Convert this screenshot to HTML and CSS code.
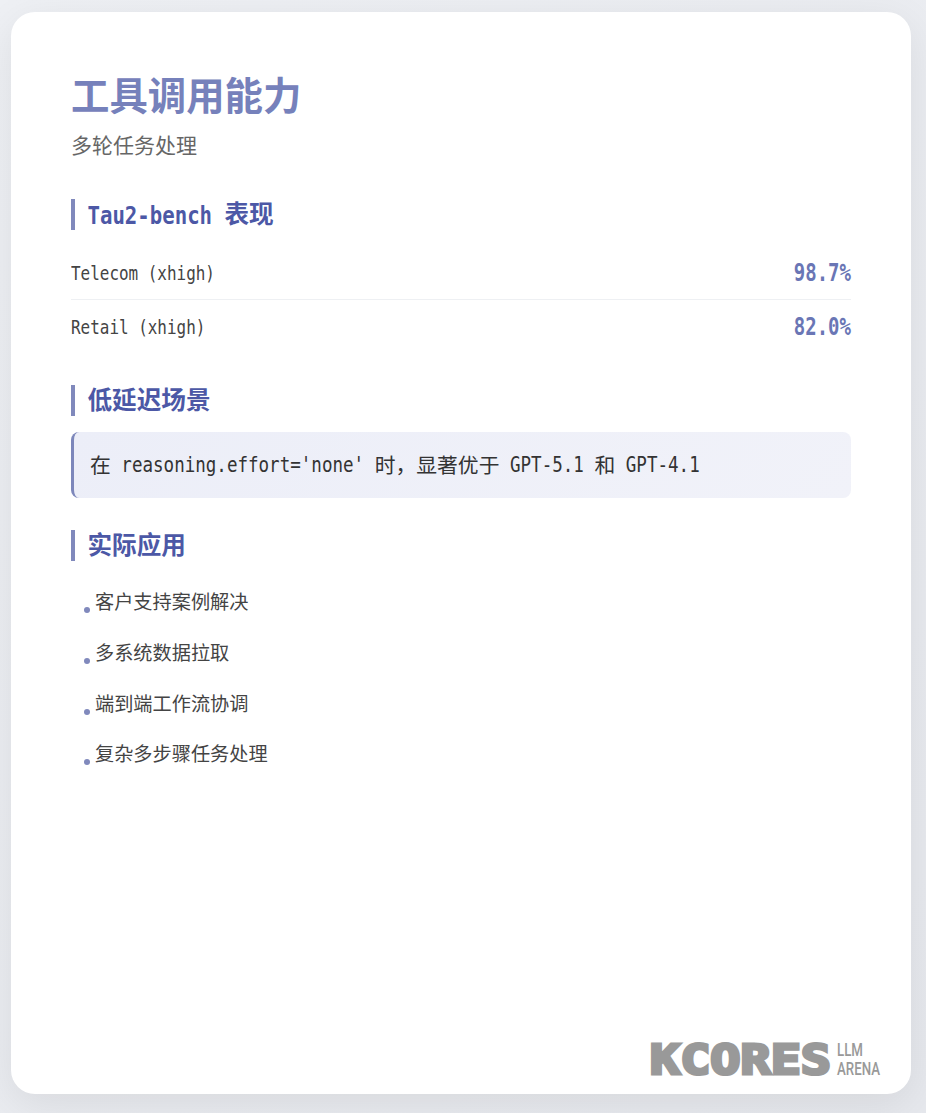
FILE: index.html
```html
<!DOCTYPE html>
<html lang="zh-CN">
<head>
<meta charset="utf-8">
<title>工具调用能力</title>
<link rel="stylesheet" href="styles.css">
</head>
<body>
<main class="card">
  <h1 class="title">工具调用能力</h1>
  <p class="subtitle">多轮任务处理</p>

  <section class="section section-first">
    <h2 class="heading"><span class="lat">Tau2-bench </span>表现</h2>
    <div class="stat">
      <span class="stat-label">Telecom (xhigh)</span>
      <span class="stat-value">98.7%</span>
    </div>
    <div class="stat">
      <span class="stat-label">Retail (xhigh)</span>
      <span class="stat-value">82.0%</span>
    </div>
  </section>

  <section class="section section-second">
    <h2 class="heading">低延迟场景</h2>
    <div class="callout">在<span class="lat"> reasoning.effort='none' </span>时，显著优于<span class="lat"> GPT-5.1 </span>和<span class="lat"> GPT-4.1</span></div>
  </section>

  <section class="section section-third">
    <h2 class="heading">实际应用</h2>
    <ul class="list">
      <li class="list-item">客户支持案例解决</li>
      <li class="list-item">多系统数据拉取</li>
      <li class="list-item">端到端工作流协调</li>
      <li class="list-item">复杂多步骤任务处理</li>
    </ul>
  </section>

  <svg class="logo" width="232" height="60" viewBox="0 0 232 60" role="img" aria-label="KCORES LLM ARENA">
    <text class="logo-word" x="1" y="54" textLength="181" lengthAdjust="spacingAndGlyphs">KCORES</text>
    <text class="logo-side" x="188" y="36" textLength="26" lengthAdjust="spacingAndGlyphs">LLM</text>
    <text class="logo-side" x="188" y="55" textLength="43" lengthAdjust="spacingAndGlyphs">ARENA</text>
  </svg>
</main>
</body>
</html>
```
FILE: styles.css
```css
* { box-sizing: border-box; }

html, body { margin: 0; height: 100%; }

body {
  padding: 12px 15px 19px 11px;
  background: linear-gradient(135deg, #eef0f4 0%, #e6e8ed 100%);
  font-family: "Noto Sans CJK SC", "Noto Sans", sans-serif;
  overflow: hidden;
}

.card {
  position: relative;
  height: 100%;
  padding: 60px 60px 0;
  background: #fff;
  border-radius: 24px;
  box-shadow: 0 10px 40px rgba(0, 0, 0, 0.08);
}

.title {
  margin: 0;
  font-size: 38.4px;
  line-height: 42px;
  font-weight: 700;
  color: #7681bb;
}

.subtitle {
  margin: 15px 0 0;
  font-size: 21px;
  line-height: 30px;
  font-weight: 400;
  color: #666;
}

.section-first { margin-top: 40px; }
.section-second { margin-top: 31px; }
.section-third { margin-top: 32px; }

.heading {
  margin: 0;
  height: 31px;
  padding-left: 12.5px;
  border-left: 4px solid #8089bc;
  font-size: 24.6px;
  line-height: 26px;
  font-weight: 700;
  color: #4c58a6;
  white-space: pre;
}

.heading .lat { font-size: 20.7px; }

.lat, .stat-label, .stat-value {
  display: inline-block;
  font-family: "DejaVu Sans Mono", "Liberation Mono", monospace;
  transform: scaleY(1.2);
  transform-origin: 50% 65%;
}

.stat {
  display: flex;
  justify-content: space-between;
  align-items: center;
  height: 54px;
  border-bottom: 1px solid #eef0f3;
}

.section-first .heading { margin-bottom: 16px; }

.stat + .stat { border-bottom: 0; }

.stat-label {
  padding-top: 1px;
  font-size: 15.95px;
  color: #444;
}

.stat-value {
  font-size: 19px;
  font-weight: 700;
  color: #6a76b5;
  transform: scaleY(1.26);
}

.callout {
  margin-top: 16px;
  height: 66px;
  padding-left: 16px;
  border-left: 3px solid #7d87bb;
  border-radius: 8px;
  background: linear-gradient(135deg, #eceef8 0%, #f1f2f9 100%);
  font-size: 20.8px;
  line-height: 64px;
  color: #333;
  white-space: pre;
}

.callout .lat { font-size: 17.55px; }

.list {
  margin: 15.3px 0 0;
  padding: 0;
  list-style: none;
}

.list-item {
  position: relative;
  height: 50.7px;
  padding-left: 24px;
  font-size: 19.2px;
  line-height: 50.7px;
  color: #444;
}

.list-item::before {
  content: "";
  position: absolute;
  left: 13px;
  top: 31px;
  width: 6px;
  height: 6px;
  border-radius: 50%;
  background: #8089bc;
}

.logo {
  position: absolute;
  right: 30px;
  bottom: 14px;
  display: block;
  overflow: visible;
}

.logo-word {
  font-family: "DejaVu Sans Mono", monospace;
  font-size: 40px;
  font-weight: 700;
  fill: #999;
  stroke: #999;
  stroke-width: 3px;
}

.logo-side {
  font-family: "Roboto", "Liberation Sans", sans-serif;
  font-size: 18px;
  font-weight: 500;
  fill: #999;
}
```
